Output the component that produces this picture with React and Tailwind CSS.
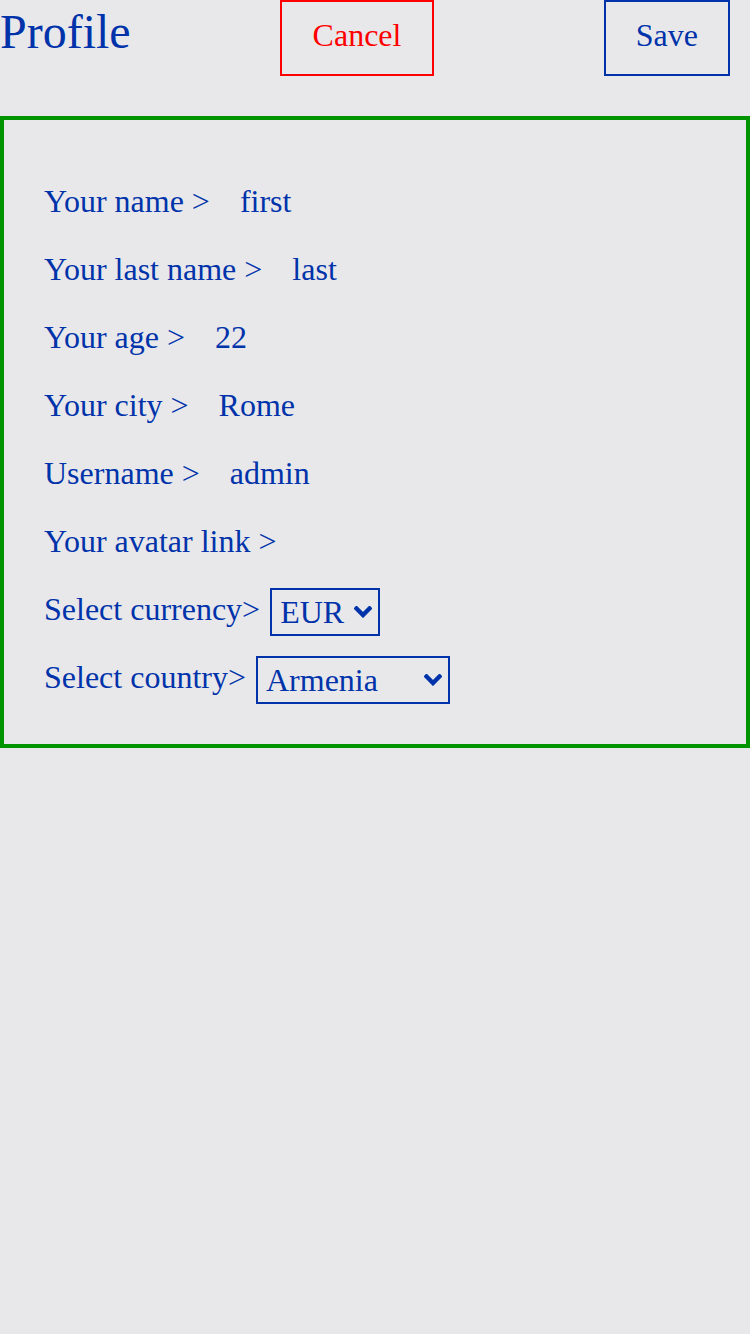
import { useState } from "react";

const fields = [
  { label: "Your name >", value: "first" },
  { label: "Your last name >", value: "last" },
  { label: "Your age >", value: "22" },
  { label: "Your city >", value: "Rome" },
  { label: "Username >", value: "admin" },
  { label: "Your avatar link >", value: "" },
];

function Chevron() {
  return (
    <svg className="pointer-events-none absolute top-1/2 -translate-y-1/2 right-[8px] w-[18px] h-[12px]" viewBox="0 0 18 12" fill="none">
      <path d="M2.5 2.5 L9 9 L15.5 2.5" stroke="#0033aa" strokeWidth={4.4} strokeLinecap="square" />
    </svg>
  );
}

function Select({ value, onChange, options, width }) {
  return (
    <div className={`relative ml-[10px] mt-[3px] ${width}`}>
      <select
        value={value}
        onChange={(e) => onChange(e.target.value)}
        className="appearance-none w-full h-12 border-2 border-[#0033aa] bg-transparent pl-[8px] pr-8 text-[32px] leading-none text-[#0033aa] outline-none rounded-none"
      >
        {options.map((o) => (
          <option key={o} value={o}>{o}</option>
        ))}
      </select>
      <Chevron />
    </div>
  );
}

export default function App() {
  const [currency, setCurrency] = useState("EUR");
  const [country, setCountry] = useState("Armenia");

  return (
    <div className="min-h-[1334px] bg-[#e8e8ea] text-[#0033aa] font-['Liberation_Serif',serif]">
      {/* Header */}
      <div className="flex items-start pr-5">
        <h1 className="w-[280px] -mt-[4px] text-[48px] leading-normal">Profile</h1>
        <button className="w-[154px] h-[76px] pb-[6px] border-2 border-[#ff0000] text-[32px] text-[#ff0000] leading-normal">
          Cancel
        </button>
        <button className="ml-auto h-[76px] px-[30px] pb-[6px] border-2 border-[#0033aa] text-[32px] leading-normal">
          Save
        </button>
      </div>

      {/* Form */}
      <div className="mt-10 border-4 border-[#009400] pl-10 pt-[57px] pb-[43px] flex flex-col gap-5">
        {fields.map((f) => (
          <div key={f.label} className="flex items-start h-12 text-[32px] leading-[48px]">
            <span>{f.label}</span>
            {f.value && <span className="ml-[30px]">{f.value}</span>}
          </div>
        ))}
        <div className="flex items-start h-12 text-[32px] leading-[48px]">
          <span>Select currency&gt;</span>
          <Select value={currency} onChange={setCurrency} options={["EUR", "USD", "RUB"]} width="w-[110px]" />
        </div>
        <div className="flex items-start h-12 text-[32px] leading-[48px]">
          <span>Select country&gt;</span>
          <Select value={country} onChange={setCountry} options={["Armenia", "Italy", "Germany"]} width="w-[194px]" />
        </div>
      </div>
    </div>
  );
}
